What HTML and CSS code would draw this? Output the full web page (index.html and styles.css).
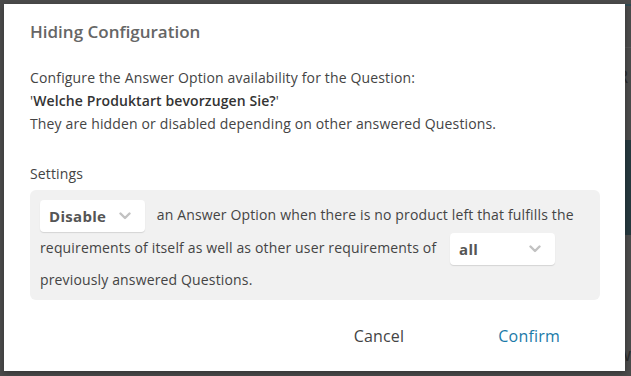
FILE: index.html
```html
<!DOCTYPE html>
<html lang="en">
<head>
    <meta charset="UTF-8">
    <meta name="viewport" content="width=device-width, initial-scale=1.0">
    <title>Hiding Configuration</title>
    <link rel="stylesheet" href="styles.css">
</head>
<body>
    <div class="backdrop">
        <div class="page-side">
            <div class="side-rule"></div>
            <span class="side-letter side-r">R</span>
            <div class="side-teal"></div>
            <span class="side-letter side-n">r</span>
            <span class="side-letter side-w">w</span>
        </div>
    </div>

    <div class="modal">
        <h1 class="modal-title">Hiding Configuration</h1>

        <div class="modal-body">
            <p class="intro">
                Configure the Answer Option availability for the Question:<br>
                '<strong>Welche Produktart bevorzugen Sie?</strong>'<br>
                They are hidden or disabled depending on other answered Questions.
            </p>

            <div class="settings-label">Settings</div>
            <div class="settings-box">
                <p class="settings-text">
                    <span class="dropdown dropdown-mode">
                        <span class="dropdown-value">Disable</span>
                        <svg class="chevron" viewBox="0 0 12 8" width="12" height="8"><path d="M1.5 1.5 L6 6 L10.5 1.5" fill="none" stroke="currentColor" stroke-width="2.4" stroke-linecap="round" stroke-linejoin="round"/></svg>
                    </span>
                    an Answer Option when there is no product left that fulfills the
                    requirements of itself as well as other user requirements of
                    <span class="dropdown dropdown-scope">
                        <span class="dropdown-value">all</span>
                        <svg class="chevron" viewBox="0 0 12 8" width="12" height="8"><path d="M1.5 1.5 L6 6 L10.5 1.5" fill="none" stroke="currentColor" stroke-width="2.4" stroke-linecap="round" stroke-linejoin="round"/></svg>
                    </span>
                    previously answered Questions.
                </p>
            </div>
        </div>

        <div class="modal-footer">
            <button class="btn btn-cancel">Cancel</button>
            <button class="btn btn-confirm">Confirm</button>
        </div>
    </div>
</body>
</html>
```

FILE: styles.css
```css
html, body {
    margin: 0;
    height: 100%;
}

body {
    font-family: 'Open Sans', 'Liberation Sans', sans-serif;
    background-color: #4b4b4b;
    position: relative;
    overflow: hidden;
}

/* page content dimmed behind the modal */
.backdrop {
    height: 100%;
    display: flex;
    justify-content: flex-end;
}

.page-side {
    width: 12px;
    position: relative;
    border-top: 2px solid #2f4a52;
    margin-top: 4px;
}

.side-rule {
    height: 1px;
    background-color: #555;
    margin-top: 41px;
}

.side-teal {
    height: 95px;
    background-color: #26393f;
    margin-top: 92px;
}

.side-letter {
    position: absolute;
    left: -2px;
    color: #2a2a2a;
    font-size: 18px;
}

.side-r { top: 58px; }
.side-n { top: 236px; }
.side-w { top: 336px; }

/* modal */
.modal {
    position: absolute;
    top: 4px;
    left: 4px;
    width: 621px;
    height: 367px;
    background-color: #fff;
    box-shadow: 0 2px 6px rgba(0, 0, 0, 0.3);
    box-sizing: border-box;
    padding: 0 25px 0 26px;
    display: flex;
    flex-direction: column;
}

.modal-title {
    margin: 16px 0 0;
    font-size: 17px;
    font-weight: 600;
    color: #666;
    line-height: 24px;
}

.modal-body {
    margin-top: 22px;
}

.intro {
    margin: 0;
    font-size: 14px;
    line-height: 23px;
    letter-spacing: 0.15px;
    color: #444;
}

.intro strong {
    font-weight: 600;
    color: #333;
    letter-spacing: 0.1px;
}

.settings-label {
    margin-top: 29px;
    font-size: 14px;
    line-height: 20px;
    letter-spacing: 0.15px;
    color: #444;
}

.settings-box {
    margin-top: 6px;
    background-color: #f1f1f1;
    border-radius: 6px;
    padding: 10px 10px 6px;
}

.settings-text {
    margin: 0;
    font-size: 14px;
    line-height: 28px;
    letter-spacing: 0.15px;
    color: #444;
}

.dropdown {
    display: inline-flex;
    align-items: center;
    justify-content: space-between;
    box-sizing: border-box;
    width: 105px;
    height: 32px;
    padding: 0 14px 0 9px;
    background-color: #fff;
    border-radius: 4px;
    box-shadow: 0 1px 1px rgba(0, 0, 0, 0.12);
    vertical-align: middle;
    line-height: 32px;
    letter-spacing: 0.3px;
}

.dropdown-mode {
    margin-right: 8px;
}

.dropdown-scope {
    margin: 1px 0 1px 10px;
}

.dropdown-value {
    font-weight: 700;
    font-size: 15px;
    color: #555;
}

.chevron {
    color: #c2c2c2;
}

.modal-footer {
    margin-top: auto;
    margin-bottom: 18px;
    display: flex;
    justify-content: flex-end;
}

.btn {
    font-family: inherit;
    font-size: 16px;
    letter-spacing: 0.2px;
    background: none;
    border: none;
    padding: 6px 22px;
    cursor: pointer;
}

.btn-cancel {
    color: #444;
    margin-right: 50px;
}

.btn-confirm {
    color: #1b7aa8;
    padding-right: 40px;
}
```
